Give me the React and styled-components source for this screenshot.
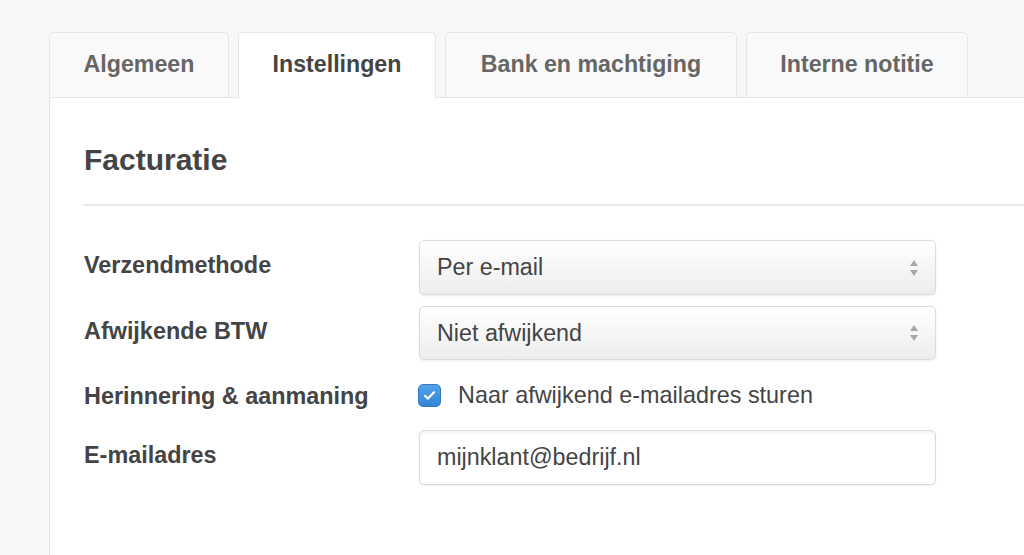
import React from "react";
import styled, { createGlobalStyle } from "styled-components";

const GlobalStyle = createGlobalStyle`
  html, body {
    margin: 0;
    padding: 0;
    background: #f7f7f7;
    font-family: "Liberation Sans", Arial, sans-serif;
    color: #444;
  }
  * {
    box-sizing: border-box;
  }
`;

const Page = styled.div`
  padding: 32px 0 0 49px;
  min-height: 555px;
  display: flex;
  flex-direction: column;
`;

const TabBar = styled.div`
  display: flex;
  align-items: flex-start;
  gap: 9px;
  position: relative;
  z-index: 1;
`;

const Tab = styled.div`
  width: ${(p) => p.w}px;
  height: ${(p) => (p.active ? "66px" : "65px")};
  margin-bottom: ${(p) => (p.active ? "-1px" : "0")};
  padding-bottom: 2px;
  display: flex;
  align-items: center;
  justify-content: center;
  border: 1px solid #e6e6e6;
  border-bottom: none;
  border-radius: 5px 5px 0 0;
  background: ${(p) => (p.active ? "#fff" : "#f9f9f9")};
  color: ${(p) => (p.active ? "#444" : "#666")};
  font-size: 23.2px;
  font-weight: bold;
  white-space: nowrap;
`;

const Panel = styled.div`
  flex: 1;
  background: #fff;
  border-top: 1px solid #e6e6e6;
  border-left: 1px solid #e6e6e6;
  padding: 44px 0 40px 34px;
`;

const Heading = styled.h2`
  margin: 0;
  font-size: 30px;
  line-height: 36px;
  font-weight: bold;
  color: #444;
`;

const Rule = styled.hr`
  margin: 26px 0 34px;
  border: none;
  border-top: 2px solid #e8e8e8;
`;

const Form = styled.div`
  display: grid;
  grid-template-columns: 335px 517px;
  row-gap: 11px;
`;

const Label = styled.div`
  padding-top: 13px;
  font-size: 23.4px;
  line-height: 24px;
  font-weight: bold;
  color: #444;
`;

const Select = styled.div`
  height: ${(p) => p.h || 55}px;
  border: 1px solid #dcdcdc;
  border-radius: 5px;
  background: linear-gradient(#ffffff, #ededed);
  box-shadow: 0 1px 2px rgba(0, 0, 0, 0.08);
  display: flex;
  align-items: center;
  justify-content: space-between;
  padding: 0 16px 0 17px;
  font-size: 23.3px;
  color: #444;
`;

const Arrows = styled.svg`
  width: 10px;
  height: 20px;
`;

const Input = styled.div`
  height: 55px;
  border: 1px solid #dcdcdc;
  border-radius: 5px;
  background: #fff;
  box-shadow: inset 0 2px 3px rgba(0, 0, 0, 0.06), 0 1px 2px rgba(0, 0, 0, 0.06);
  display: flex;
  align-items: center;
  padding: 0 17px;
  font-size: 23.3px;
  color: #444;
`;

const CheckRow = styled.div`
  height: 48px;
  display: flex;
  align-items: center;
  gap: 17px;
  font-size: 23.4px;
  color: #444;
`;

const Checkbox = styled.span`
  width: 23px;
  height: 23px;
  margin-left: -1px;
  border-radius: 5px;
  background: linear-gradient(#52a2e8, #3584d4);
  border: 1px solid #2f7bc4;
  display: flex;
  align-items: center;
  justify-content: center;
`;

const SelectArrows = () => (
  <Arrows viewBox="0 0 10 20">
    <path d="M5 2 L9 8 L1 8 Z" fill="#a8a8a8" />
    <path d="M1 12 L9 12 L5 18 Z" fill="#a8a8a8" />
  </Arrows>
);

const tabs = [
  { label: "Algemeen", w: 180 },
  { label: "Instellingen", w: 198, active: true },
  { label: "Bank en machtiging", w: 292 },
  { label: "Interne notitie", w: 222 },
];

export default function App() {
  return (
    <>
      <GlobalStyle />
      <Page>
        <TabBar>
          {tabs.map((t) => (
            <Tab key={t.label} w={t.w} active={t.active}>
              {t.label}
            </Tab>
          ))}
        </TabBar>
        <Panel>
          <Heading>Facturatie</Heading>
          <Rule />
          <Form>
            <Label>Verzendmethode</Label>
            <Select>
              Per e-mail
              <SelectArrows />
            </Select>
            <Label>Afwijkende BTW</Label>
            <Select h={54}>
              Niet afwijkend
              <SelectArrows />
            </Select>
            <Label>Herinnering &amp; aanmaning</Label>
            <CheckRow>
              <Checkbox>
                <svg width="15" height="15" viewBox="0 0 15 15">
                  <path
                    d="M3 7.8 L6 10.6 L12 4.2"
                    fill="none"
                    stroke="#fff"
                    strokeWidth="2.2"
                    strokeLinecap="round"
                    strokeLinejoin="round"
                  />
                </svg>
              </Checkbox>
              Naar afwijkend e-mailadres sturen
            </CheckRow>
            <Label>E-mailadres</Label>
            <Input>mijnklant@bedrijf.nl</Input>
          </Form>
        </Panel>
      </Page>
    </>
  );
}
